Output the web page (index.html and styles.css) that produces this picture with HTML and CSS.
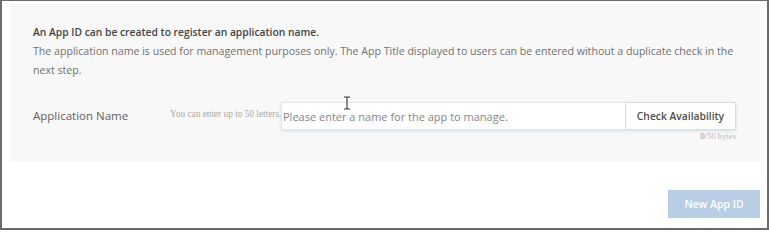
FILE: index.html
```html
<!DOCTYPE html>
<html>
<head>
<meta charset="utf-8">
<link rel="stylesheet" href="styles.css">
</head>
<body>
<div class="frame">
  <section class="panel">
    <p class="intro"><strong>An App ID can be created to register an application name.</strong><br>The application name is used for management purposes only. The App Title displayed to users can be entered without a duplicate check in the next step.</p>
    <div class="row">
      <label class="label">Application Name</label>
      <span class="hint">You can enter up to 50 letters.</span>
      <div class="field">
        <div class="inputbox">
          <input class="input" type="text" placeholder="Please enter a name for the app to manage.">
          <button class="check">Check Availability</button>
          <svg class="cursor" width="8" height="14" viewBox="0 0 8 14"><path d="M1 1h2.2l0.8 0.8 0.8-0.8H7M4 1.8v10.4M1 13h2.2l0.8-0.8 0.8 0.8H7" fill="none" stroke="#333" stroke-width="1.1"/></svg>
        </div>
        <div class="count"><span class="zero">0</span>/50 bytes</div>
      </div>
    </div>
  </section>
  <div class="actions">
    <button class="primary">New App ID</button>
  </div>
</div>
</body>
</html>
```
FILE: styles.css
```css
html, body { margin: 0; padding: 0; background: #fff; }
.frame {
  width: 769px; height: 230px; box-sizing: border-box;
  border-left: 2px solid #6b6b6b; border-top: 1px solid #6b6b6b;
  border-right: 2px solid #6b6b6b; border-bottom: 2px solid #6b6b6b;
  padding: 3px 7px 0 8px;
  font-family: "Open Sans", "Noto Sans", sans-serif;
}
.panel {
  background: #f8f8f8; height: 158px; box-sizing: border-box;
  padding: 19px 20px 0 23px;
}
.intro { margin: 0; font-size: 10.6px; line-height: 19px; color: #707070; }
.intro strong { color: #444; font-weight: 600; font-size: 10.3px; }
.row { display: flex; align-items: flex-start; margin-top: 22px; }
.label { width: 137px; font-size: 11.5px; color: #5f5f5f; padding-top: 6px; }
.hint { font-family: "Liberation Serif", serif; font-size: 9.3px; color: #aaa; padding-top: 7px; white-space: nowrap; width: 111px; }
.field { display: flex; flex-direction: column; }
.inputbox {
  position: relative; display: flex; width: 455px; height: 28px; box-sizing: border-box;
  border: 1px solid #e3e6ea; background: #fff; box-shadow: 0 1px 3px rgba(150,170,200,0.35);
}
.input {
  flex: 1; border: 0; outline: 0; padding: 0 0 0 1px; font-family: inherit; font-size: 11px; color: #555; background: transparent;
}
.input::placeholder { color: #858585; }
.check {
  width: 111px; border: 1px solid #dcdcdc; margin: -1px -1px -1px 0; background: #fff;
  font-family: inherit; font-size: 10.3px; font-weight: 600; color: #4d4d4d; padding: 0;
}
.cursor { position: absolute; left: 61px; top: -7px; }
.count { align-self: flex-end; font-family: "Liberation Serif", serif; font-size: 8.6px; color: #bbb; margin-top: 1px; margin-right: 0; }
.zero { color: #e26a5a; }
.actions { display: flex; justify-content: flex-end; padding-top: 28px; }
.primary {
  width: 92px; height: 28px; border: 0; background: #b9cde6; color: #fff;
  font-family: inherit; font-size: 10.5px; font-weight: 600; padding: 0;
}
```
